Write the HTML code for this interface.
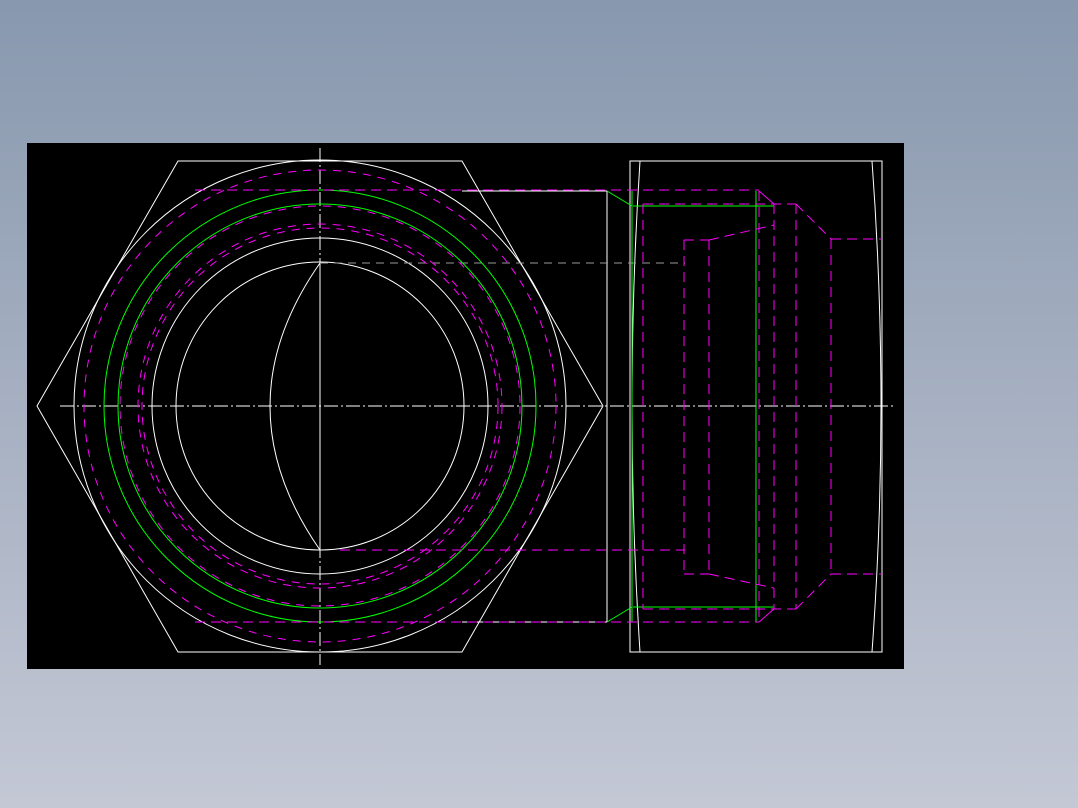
<!DOCTYPE html>
<html><head><meta charset="utf-8"><style>
html,body{margin:0;padding:0;width:1078px;height:808px;overflow:hidden;background:linear-gradient(#8898ae,#c4c8d5);}
svg{position:absolute;left:0;top:0}
</style></head><body>
<svg width="1078" height="808" viewBox="0 0 1078 808" fill="none">
<rect x="27" y="143" width="877" height="526" fill="#000"/>
<g stroke="#fff" stroke-width="1">
<polygon points="37,406 178,161 462,161 603,406 462,652 178,652"/>
<circle cx="320" cy="406" r="246"/>
<circle cx="320" cy="406" r="168"/>
<circle cx="320" cy="406" r="144"/>
<path d="M320,263 Q220,406 320,550"/>
<line x1="320" y1="263" x2="320" y2="550"/>
<line x1="462" y1="191" x2="607" y2="191"/>
<line x1="462" y1="622" x2="607" y2="622"/>
<line x1="607" y1="191" x2="607" y2="622"/>
<rect x="630" y="161" width="252" height="491"/>
<path d="M640,161 Q624,406 640,652"/>
<path d="M872,161 Q890,406 872,652"/>
<line x1="320" y1="148" x2="320" y2="665" stroke-dasharray="14,3,2,3"/>
<line x1="60" y1="406" x2="895" y2="406" stroke-dasharray="14,3,2,3"/>
<line x1="320" y1="263" x2="685" y2="263" stroke="#999" stroke-dasharray="8,6"/>
</g>
<g stroke="#0f0" stroke-width="1">
<circle cx="320" cy="406" r="216"/>
<circle cx="320" cy="406" r="202"/>
<line x1="632" y1="191" x2="632" y2="622"/>
<line x1="756" y1="191" x2="756" y2="622"/>
<line x1="633" y1="206" x2="774" y2="206"/>
<line x1="633" y1="607" x2="774" y2="607"/>
<line x1="607" y1="191" x2="632" y2="206"/>
<line x1="607" y1="622" x2="632" y2="607"/>
</g>
<g stroke="#f0f" stroke-width="1" stroke-dasharray="8,7">
<circle cx="320" cy="406" r="236"/>
<circle cx="320" cy="406" r="182"/>
<circle cx="320" cy="406" r="178"/>
<circle cx="320" cy="406" r="200"/>
</g>
<g stroke="#f0f" stroke-width="1" stroke-dasharray="10,6">
<line x1="195" y1="190" x2="759" y2="190"/>
<line x1="195" y1="622" x2="759" y2="622"/>
<line x1="340" y1="550" x2="685" y2="550"/>
<line x1="643" y1="204" x2="796" y2="204"/>
<line x1="643" y1="609" x2="796" y2="609"/>
<line x1="643" y1="204" x2="643" y2="609"/>
<line x1="684" y1="240" x2="684" y2="574"/>
<line x1="709" y1="240" x2="709" y2="574"/>
<line x1="759" y1="191" x2="759" y2="622"/>
<line x1="774" y1="204" x2="774" y2="609"/>
<line x1="796" y1="204" x2="796" y2="609"/>
<line x1="831" y1="239" x2="831" y2="574"/>
<line x1="831" y1="239" x2="882" y2="239"/>
<line x1="831" y1="574" x2="882" y2="574"/>
<line x1="796" y1="204" x2="831" y2="239"/>
<line x1="796" y1="609" x2="831" y2="574"/>
<line x1="684" y1="240" x2="709" y2="240"/>
<line x1="684" y1="574" x2="709" y2="574"/>
<line x1="709" y1="240" x2="774" y2="225"/>
<line x1="709" y1="574" x2="774" y2="588"/>
</g>
<g stroke="#f0f" stroke-width="1">
<line x1="759" y1="191" x2="774" y2="204"/>
<line x1="759" y1="622" x2="774" y2="609"/>
</g>
</svg>
</body></html>
